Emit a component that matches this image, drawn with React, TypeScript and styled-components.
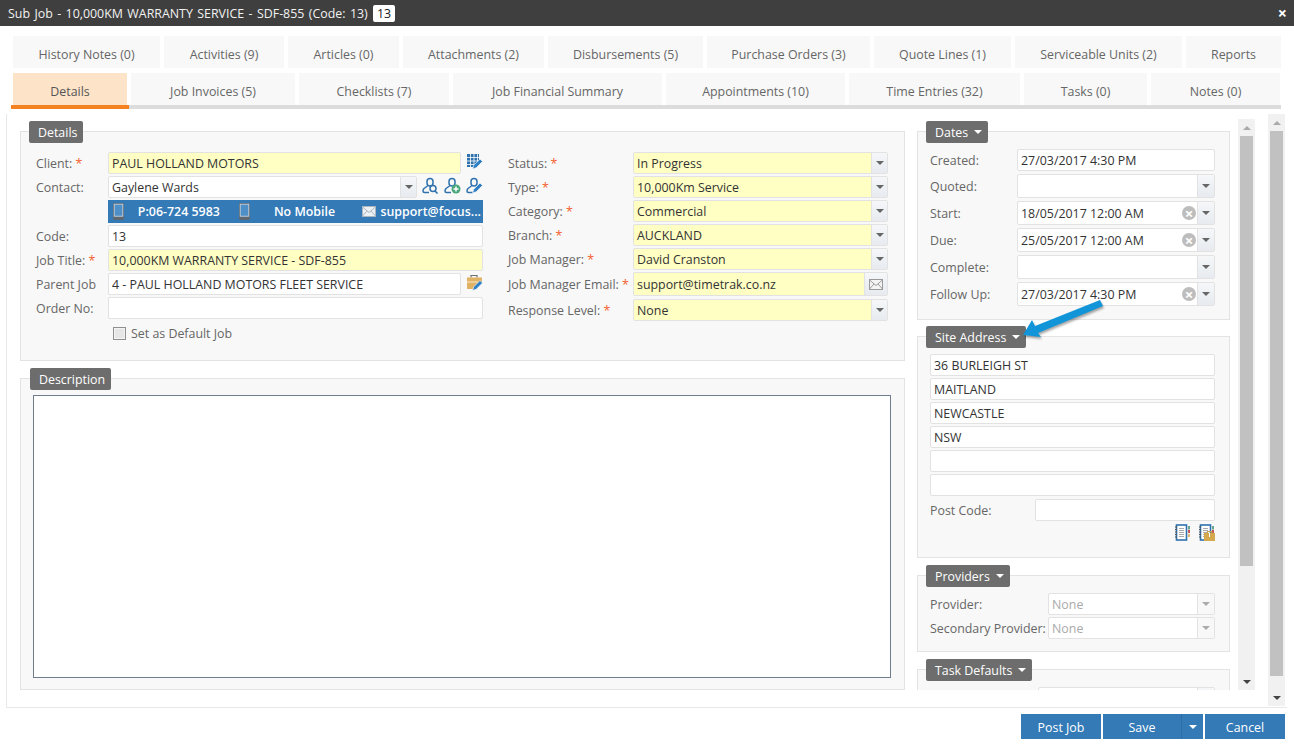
import React from 'react';
import styled, {createGlobalStyle} from 'styled-components';

const GlobalStyle = createGlobalStyle`
  html, body {
    margin: 0;
    padding: 0;
    background: #fff;
    overflow: hidden;
  }
  * {
    box-sizing: border-box;
  }
  body {
    font-family: "Open Sans", "Liberation Sans", sans-serif;
    font-size: 12.4px;
    color: #333;
  }
`

const BLUE = '#2f72ad'
const PEN = '#2f7fc4'

const topTabs = [
    {label: 'History Notes (0)', w: 147},
    {label: 'Activities (9)', w: 120},
    {label: 'Articles (0)', w: 111},
    {label: 'Attachments (2)', w: 141},
    {label: 'Disbursements (5)', w: 155},
    {label: 'Purchase Orders (3)', w: 163},
    {label: 'Quote Lines (1)', w: 137},
    {label: 'Serviceable Units (2)', w: 167},
    {label: 'Reports', w: 95},
]

const bottomTabs = [
    {label: 'Job Invoices (5)', w: 164},
    {label: 'Checklists (7)', w: 150},
    {label: 'Job Financial Summary', w: 209},
    {label: 'Appointments (10)', w: 179},
    {label: 'Time Entries (32)', w: 171},
    {label: 'Tasks (0)', w: 123},
    {label: 'Notes (0)', w: 129},
]

const Pencil = ({x = 0, y = 0}: {x?: number, y?: number}) => (
    <path transform={`translate(${x} ${y}) scale(1.25)`} d="M0 8 L1 5 L6 0 L8 2 L3 7 Z" fill={PEN} stroke="#fff" strokeWidth="0.5"/>
)

const Person = () => (
    <path d="M8 1.5 a3 3 0 0 1 3 3 v1.5 a3 3 0 0 1 -6 0 v-1.5 a3 3 0 0 1 3 -3 Z M5.5 9 L2 11.5 q-1 1 -1 2.5 q0 1.5 1.5 1.5 H7" fill="none" stroke={BLUE} strokeWidth="1.5"/>
)

const SearchPersonIcon = () => (
    <svg width="17" height="17" viewBox="0 0 17 17">
        <Person/>
        <circle cx="11" cy="11.5" r="3" fill="none" stroke={BLUE} strokeWidth="1.5"/>
        <path d="M13 14 L15.5 16.5" stroke={BLUE} strokeWidth="1.6"/>
    </svg>
)

const AddPersonIcon = () => (
    <svg width="17" height="17" viewBox="0 0 17 17">
        <Person/>
        <circle cx="12" cy="12" r="4.5" fill="#4aa77c"/>
        <path d="M12 9.5 V14.5 M9.5 12 H14.5" stroke="#fff" strokeWidth="1.5"/>
    </svg>
)

const EditPersonIcon = () => (
    <svg width="17" height="17" viewBox="0 0 17 17">
        <Person/>
        <Pencil x={6.5} y={6}/>
    </svg>
)

const BuildingIcon = () => (
    <svg width="17" height="17" viewBox="0 0 17 17">
        <path d="M1 1 H13 V8 L7 14 H1 Z" fill={BLUE}/>
        <path d="M4.5 1 V14 M8 1 V11 M11.5 1 V8 M1 4.5 H13 M1 8 H13 M1 11.5 H8" stroke="#fff" strokeWidth="0.8"/>
        <Pencil x={6.5} y={6}/>
    </svg>
)

const CaseIcon = () => (
    <svg width="17" height="17" viewBox="0 0 17 17">
        <path d="M5 3.5 V1.5 H11 V3.5" fill="none" stroke="#6f6f6f" strokeWidth="1.2"/>
        <path d="M1 3.5 H16 V8 L9 15 H1 Z" fill="#e0b263"/>
        <path d="M1 8 H12" stroke="#fff" strokeWidth="0.7"/>
        <Pencil x={6.5} y={6.5}/>
    </svg>
)

const BookBase = () => (
    <>
        <rect x="2.5" y="1" width="10" height="15" fill="#fff" stroke={BLUE} strokeWidth="1.6"/>
        <path d="M1 3 H3 M1 5.5 H3 M1 8 H3 M1 10.5 H3 M1 13 H3" stroke="#555" strokeWidth="1"/>
        <path d="M5 4.5 H10 M5 6.5 H10 M5 8.5 H10 M5 10.5 H10 M5 12.5 H10" stroke="#aaa" strokeWidth="1"/>
        <rect x="14" y="2" width="2" height="3.5" fill="#6ba58b"/>
        <rect x="14" y="6" width="2" height="3" fill="#c9555a"/>
        <rect x="14" y="10" width="2" height="3" fill="#e2bb6d"/>
    </>
)

const BookIcon = () => (
    <svg width="17" height="17" viewBox="0 0 17 17"><BookBase/></svg>
)

const BookCaseIcon = () => (
    <svg width="17" height="17" viewBox="0 0 17 17">
        <BookBase/>
        <path d="M9.5 9 V7.5 H13.5 V9" fill="none" stroke="#c9a24f" strokeWidth="1.2"/>
        <rect x="6" y="9" width="11" height="8" fill="#d4a94e"/>
        <path d="M11.5 9 V13" stroke="#fff" strokeWidth="1"/>
    </svg>
)

const DeviceIcon = () => (
    <DeviceSvg width="11" height="17" viewBox="0 0 11 17">
        <rect x="0" y="0" width="11" height="17" rx="1.4" fill="#5d6873"/>
        <rect x="1.2" y="1.2" width="8.6" height="12" fill="#4f8fc8" stroke="#cfdbe6" strokeWidth="0.8"/>
    </DeviceSvg>
)

const MailIcon = ({color, line}: {color: string, line: string}) => (
    <svg width="14" height="11" viewBox="0 0 14 11">
        <rect x="0.5" y="0.5" width="13" height="10" fill={color} stroke={line} strokeWidth="1"/>
        <path d="M0.5 1 L7 6.5 L13.5 1 M0.5 10 L5 5 M13.5 10 L9 5" fill="none" stroke={line} strokeWidth="1"/>
    </svg>
)

const Caret = ({up, color}: {up?: boolean, color?: string}) => <CaretShape $up={up} $color={color}/>

const Required = () => <Star>*</Star>

const Scrollbar = ({thumb, ...rest}: {thumb: number, $top: number, $left: number, $h: number}) => (
    <ScrollTrack {...rest}>
        <ScrollButton><Caret up color={'#aaa'}/></ScrollButton>
        <ScrollThumb $h={thumb}/>
        <ScrollSpacer/>
        <ScrollButton><Caret color={'#444'}/></ScrollButton>
    </ScrollTrack>
)

const DateField = ({value, clear}: {value?: string, clear?: boolean}) => (
    <FieldBox $h={24}>
        <FieldText>{value}</FieldText>
        {clear && <ClearDot>×</ClearDot>}
        <DropCell $w={17}><Caret color={'#666'}/></DropCell>
    </FieldBox>
)

const Combo = ({value, yellow}: {value: string, yellow?: boolean}) => (
    <FieldBox $yellow={yellow}>
        <FieldText>{value}</FieldText>
        <DropCell><Caret color={'#666'}/></DropCell>
    </FieldBox>
)

const Arrow = () => (
    <ArrowOverlay width="90" height="50" viewBox="0 0 90 50">
        <path d="M3 40 L12 25 L15 31 L80 5 L83 11 L18 38 L21 42 Z" fill="#1295d8"/>
    </ArrowOverlay>
)

export default function App() {
    return (
        <Page>
            <GlobalStyle/>
            <TitleBar>
                <TitleText>Sub Job - 10,000KM WARRANTY SERVICE - SDF-855 (Code: 13)</TitleText>
                <TitleBadge>13</TitleBadge>
                <CloseMark>×</CloseMark>
            </TitleBar>

            <TabsArea>
                <TabRow>
                    {topTabs.map(t => <Tab key={t.label} $w={t.w}>{t.label}</Tab>)}
                </TabRow>
                <TabRow>
                    <Tab $w={114} $active>Details</Tab>
                    {bottomTabs.map(t => <Tab key={t.label} $w={t.w}>{t.label}</Tab>)}
                </TabRow>
            </TabsArea>
            <TabLine/>

            <Content>
                <LeftColumn>
                    <Panel $h={230}>
                        <Legend $gap={9}>Details</Legend>
                        <DetailsForm>
                            <FormColumn $w={447}>
                                <Row>
                                    <Label $w={72}>Client: <Required/></Label>
                                    <FieldBox $yellow $w={353}><FieldText>PAUL HOLLAND MOTORS</FieldText></FieldBox>
                                    <IconSlot><BuildingIcon/></IconSlot>
                                </Row>
                                <Row>
                                    <Label $w={72}>Contact:</Label>
                                    <FieldBox $w={309}>
                                        <FieldText>Gaylene Wards</FieldText>
                                        <DropCell><Caret color={'#666'}/></DropCell>
                                    </FieldBox>
                                    <IconSlot><SearchPersonIcon/></IconSlot>
                                    <IconSlot><AddPersonIcon/></IconSlot>
                                    <IconSlot><EditPersonIcon/></IconSlot>
                                </Row>
                                <Row $h={23}>
                                    <Label $w={72}/>
                                    <PhoneBar>
                                        <PhoneCell><DeviceIcon/><PhoneText>P:06-724 5983</PhoneText></PhoneCell>
                                        <PhoneCell><DeviceIcon/><PhoneText>No Mobile</PhoneText></PhoneCell>
                                        <PhoneCell $tight><MailIcon color={'#eef1f4'} line={'#a9b6c2'}/><PhoneText>support@focus...</PhoneText></PhoneCell>
                                    </PhoneBar>
                                </Row>
                                <Row>
                                    <Label $w={72}>Code:</Label>
                                    <FieldBox><FieldText>13</FieldText></FieldBox>
                                </Row>
                                <Row>
                                    <Label $w={72}>Job Title: <Required/></Label>
                                    <FieldBox $yellow><FieldText>10,000KM WARRANTY SERVICE - SDF-855</FieldText></FieldBox>
                                </Row>
                                <Row>
                                    <Label $w={72}>Parent Job</Label>
                                    <FieldBox $w={353}><FieldText>4 - PAUL HOLLAND MOTORS FLEET SERVICE</FieldText></FieldBox>
                                    <IconSlot><CaseIcon/></IconSlot>
                                </Row>
                                <Row>
                                    <Label $w={72}>Order No:</Label>
                                    <FieldBox/>
                                </Row>
                                <CheckRow>
                                    <CheckBox/>
                                    <CheckLabel>Set as Default Job</CheckLabel>
                                </CheckRow>
                            </FormColumn>
                            <FormColumn $w={380}>
                                <Row>
                                    <Label $w={125}>Status: <Required/></Label>
                                    <Combo yellow value={'In Progress'}/>
                                </Row>
                                <Row>
                                    <Label $w={125}>Type: <Required/></Label>
                                    <Combo yellow value={'10,000Km Service'}/>
                                </Row>
                                <Row>
                                    <Label $w={125}>Category: <Required/></Label>
                                    <Combo yellow value={'Commercial'}/>
                                </Row>
                                <Row>
                                    <Label $w={125}>Branch: <Required/></Label>
                                    <Combo yellow value={'AUCKLAND'}/>
                                </Row>
                                <Row>
                                    <Label $w={125}>Job Manager: <Required/></Label>
                                    <Combo yellow value={'David Cranston'}/>
                                </Row>
                                <Row $h={24} $mb={3}>
                                    <Label $w={125}>Job Manager Email: <Required/></Label>
                                    <FieldBox $yellow $h={24}>
                                        <FieldText>support@timetrak.co.nz</FieldText>
                                        <DropCell $w={23}><MailIcon color={'#f4f4f4'} line={'#9a9a9a'}/></DropCell>
                                    </FieldBox>
                                </Row>
                                <Row>
                                    <Label $w={125}>Response Level: <Required/></Label>
                                    <Combo yellow value={'None'}/>
                                </Row>
                            </FormColumn>
                        </DetailsForm>
                    </Panel>

                    <Panel $h={312} $mt={17}>
                        <Legend $gap={5} $ml={9}>Description</Legend>
                        <DescriptionBox/>
                    </Panel>
                </LeftColumn>

                <RightColumn>
                    <Panel $h={189}>
                        <Legend $gap={6}>Dates <Caret color={'#fff'}/></Legend>
                        <SideForm>
                            <Row $mb={3}>
                                <Label $w={87}>Created:</Label>
                                <FieldBox><FieldText>27/03/2017 4:30 PM</FieldText></FieldBox>
                            </Row>
                            <Row $h={24} $mb={3}>
                                <Label $w={87}>Quoted:</Label>
                                <DateField/>
                            </Row>
                            <Row $h={24} $mb={3}>
                                <Label $w={87}>Start:</Label>
                                <DateField clear value={'18/05/2017 12:00 AM'}/>
                            </Row>
                            <Row $h={24} $mb={3}>
                                <Label $w={87}>Due:</Label>
                                <DateField clear value={'25/05/2017 12:00 AM'}/>
                            </Row>
                            <Row $h={24} $mb={3}>
                                <Label $w={87}>Complete:</Label>
                                <DateField/>
                            </Row>
                            <Row $h={24} $mb={3}>
                                <Label $w={87}>Follow Up:</Label>
                                <DateField clear value={'27/03/2017 4:30 PM'}/>
                            </Row>
                        </SideForm>
                    </Panel>

                    <Panel $h={222} $mt={16}>
                        <Legend $gap={6}>Site Address <Caret color={'#fff'}/></Legend>
                        <SideForm>
                            <Row><FieldBox><FieldText>36 BURLEIGH ST</FieldText></FieldBox></Row>
                            <Row><FieldBox><FieldText>MAITLAND</FieldText></FieldBox></Row>
                            <Row><FieldBox><FieldText>NEWCASTLE</FieldText></FieldBox></Row>
                            <Row><FieldBox><FieldText>NSW</FieldText></FieldBox></Row>
                            <Row><FieldBox/></Row>
                            <Row $mb={3}><FieldBox/></Row>
                            <Row $mb={3}>
                                <Label $w={105}>Post Code:</Label>
                                <FieldBox/>
                            </Row>
                            <BookIcons><BookIcon/><BookCaseIcon/></BookIcons>
                        </SideForm>
                    </Panel>

                    <Panel $h={77} $mt={17}>
                        <Legend $gap={6}>Providers <Caret color={'#fff'}/></Legend>
                        <SideForm>
                            <Row>
                                <Label $w={118}>Provider:</Label>
                                <FieldBox>
                                    <FieldText $muted>None</FieldText>
                                    <DropCell $w={17} $light><Caret color={'#aaa'}/></DropCell>
                                </FieldBox>
                            </Row>
                            <Row>
                                <Label $w={118}>Secondary Provider:</Label>
                                <FieldBox>
                                    <FieldText $muted>None</FieldText>
                                    <DropCell $w={17} $light><Caret color={'#aaa'}/></DropCell>
                                </FieldBox>
                            </Row>
                        </SideForm>
                    </Panel>

                    <Panel $h={60} $mt={17}>
                        <Legend $gap={6}>Task Defaults <Caret color={'#fff'}/></Legend>
                        <SideForm>
                            <Row>
                                <Label $w={108}/>
                                <FieldBox>
                                    <FieldText/>
                                    <DropCell $w={17}><Caret color={'#666'}/></DropCell>
                                </FieldBox>
                            </Row>
                        </SideForm>
                    </Panel>
                </RightColumn>

                <Scrollbar thumb={430} $top={5} $left={8} $h={571}/>
                <Scrollbar thumb={545} $top={0} $left={13} $h={592}/>
            </Content>

            <Footer>
                <ActionButton $w={80}>Post Job</ActionButton>
                <SplitButton>
                    <SplitMain>Save</SplitMain>
                    <SplitToggle><Caret color={'#fff'}/></SplitToggle>
                </SplitButton>
                <ActionButton $w={80}>Cancel</ActionButton>
            </Footer>

            <Arrow/>
        </Page>
    );
}

const Page = styled.div`
  position: relative;
  width: 1294px;
  height: 748px;
  display: flex;
  flex-direction: column;
  overflow: hidden;
`

const TitleBar = styled.header`
  height: 26px;
  flex: none;
  display: flex;
  align-items: center;
  padding: 0 7px 0 8px;
  background-color: #3f3f3f;
  color: #f2f2f2;
`

const TitleText = styled.span`
  width: 360px;
  font-size: 12.4px;
  word-spacing: 1.2px;
  white-space: nowrap;
`

const TitleBadge = styled.span`
  margin-left: 5px;
  width: 22px;
  height: 17px;
  line-height: 17px;
  text-align: center;
  border-radius: 2px;
  background-color: #fff;
  color: #222;
`

const CloseMark = styled.span`
  margin-left: auto;
  font-size: 16px;
  font-weight: 700;
  line-height: 16px;
  color: #fff;
`

const TabsArea = styled.div`
  flex: none;
  display: flex;
  flex-direction: column;
  gap: 5px;
  padding: 10px 0 0 13px;
`

const TabRow = styled.div`
  display: flex;
  gap: 4px;
`

const Tab = styled.div<{ $w: number, $active?: boolean }>`
  position: relative;
  width: ${p => p.$w}px;
  height: 32px;
  padding-top: 4px;
  display: flex;
  align-items: center;
  justify-content: center;
  white-space: nowrap;
  color: ${p => p.$active ? '#555' : '#666'};
  background-color: ${p => p.$active ? '#fde3c8' : '#f8f8f8'};

  &::after {
    content: '';
    display: ${p => p.$active ? 'block' : 'none'};
    position: absolute;
    left: -2px;
    right: -2px;
    bottom: -4px;
    height: 4px;
    background-color: #f58220;
  }
`

const TabLine = styled.div`
  flex: none;
  height: 4px;
  margin: 0 13px 0 11px;
  background-color: #dcdcdc;
`

const Content = styled.main`
  flex: none;
  height: 594px;
  margin: 5px 7px 0 6px;
  display: flex;
  border-left: 1px solid #e8e8e8;
  border-bottom: 1px solid #e8e8e8;
`

const LeftColumn = styled.section`
  flex: none;
  width: 885px;
  margin-left: 13px;
  padding-top: 17px;
`

const RightColumn = styled.section`
  flex: none;
  width: 313px;
  height: 576px;
  margin-left: 12px;
  padding-top: 17px;
  overflow: hidden;
`

const Panel = styled.div<{ $h: number, $mt?: number }>`
  height: ${p => p.$h}px;
  margin-top: ${p => p.$mt ?? 0}px;
  border: 1px solid #e3e3e3;
  background-color: #f8f8f8;
`

const Legend = styled.div<{ $gap: number, $ml?: number }>`
  width: fit-content;
  height: 22px;
  margin: -11px 0 ${p => p.$gap}px ${p => p.$ml ?? 8}px;
  padding: 0 6px 0 9px;
  display: flex;
  align-items: center;
  gap: 6px;
  border-radius: 2px;
  background-color: #6d6d6d;
  color: #fff;
  white-space: nowrap;
`

const DetailsForm = styled.div`
  display: flex;
  gap: 25px;
  padding-left: 15px;
`

const SideForm = styled.div`
  padding: 0 14px 0 12px;
`

const FormColumn = styled.div<{ $w: number }>`
  flex: none;
  width: ${p => p.$w}px;
`

const Row = styled.div<{ $h?: number, $mb?: number }>`
  display: flex;
  align-items: center;
  height: ${p => p.$h ?? 22}px;
  margin-bottom: ${p => p.$mb ?? 2}px;
`

const Label = styled.label<{ $w: number }>`
  flex: none;
  width: ${p => p.$w}px;
  color: #666;
  white-space: nowrap;
`

const Star = styled.span`
  color: #f4602e;
`

const FieldBox = styled.div<{ $yellow?: boolean, $w?: number, $h?: number }>`
  flex: ${p => p.$w ? 'none' : '1'};
  width: ${p => p.$w ? `${p.$w}px` : 'auto'};
  min-width: 0;
  height: ${p => p.$h ?? 22}px;
  display: flex;
  align-items: center;
  border: 1px solid #e2e2e2;
  border-radius: 2px;
  background-color: ${p => p.$yellow ? '#ffffc4' : '#fff'};
`

const FieldText = styled.span<{ $muted?: boolean }>`
  flex: 1;
  padding: 0 3px;
  color: ${p => p.$muted ? '#aaa' : '#333'};
  white-space: nowrap;
  overflow: hidden;
`

const DropCell = styled.span<{ $w?: number, $light?: boolean }>`
  flex: none;
  align-self: stretch;
  width: ${p => p.$w ?? 16}px;
  display: flex;
  align-items: center;
  justify-content: center;
  border-left: 1px solid #e2e2e2;
  background: ${p => p.$light ? '#f8f8f8' : 'linear-gradient(#f5f7f9, #e7ebef)'};
`

const CaretShape = styled.span<{ $up?: boolean, $color?: string }>`
  display: inline-block;
  width: 0;
  height: 0;
  border-left: 4px solid transparent;
  border-right: 4px solid transparent;
  border-top: ${p => p.$up ? '0' : `4px solid ${p.$color ?? '#666'}`};
  border-bottom: ${p => p.$up ? `4px solid ${p.$color ?? '#666'}` : '0'};
`

const ClearDot = styled.span`
  flex: none;
  width: 14px;
  height: 14px;
  margin-right: 1px;
  border-radius: 50%;
  display: flex;
  align-items: center;
  justify-content: center;
  font-size: 15px;
  font-weight: 700;
  line-height: 14px;
  color: #fff;
  background-color: #bdbdbd;
`

const IconSlot = styled.span`
  flex: none;
  width: 17px;
  height: 17px;
  margin-left: 5px;
  margin-top: -3px;
  display: flex;
`

const PhoneBar = styled.div`
  flex: 1;
  height: 23px;
  display: flex;
  background-color: #337ab7;
`

const PhoneCell = styled.div<{ $tight?: boolean }>`
  flex: 1;
  min-width: 0;
  display: flex;
  align-items: center;
  gap: ${p => p.$tight ? '2px' : '0'};
  padding-left: ${p => p.$tight ? '3px' : '5px'};
  color: #fff;
  font-weight: 600;
`

const DeviceSvg = styled.svg`
  flex: none;
`

const PhoneText = styled.span`
  flex: 1;
  text-align: center;
  white-space: nowrap;
`

const CheckRow = styled.div`
  display: flex;
  align-items: center;
  gap: 5px;
  margin-top: 6px;
  padding-left: 77px;
  color: #666;
`

const CheckBox = styled.span`
  width: 13px;
  height: 13px;
  border: 1px solid #8e8f8f;
  background-color: #e6e6e6;
  box-shadow: inset 0 0 0 1px #f4f4f4;
`

const CheckLabel = styled.span`
  white-space: nowrap;
`

const DescriptionBox = styled.div`
  width: 858px;
  height: 283px;
  margin-left: 12px;
  border: 1px solid #6f7d8c;
  background-color: #fff;
`

const BookIcons = styled.div`
  display: flex;
  justify-content: flex-end;
  gap: 7px;
  margin-top: 1px;
`

const ScrollTrack = styled.div<{ $top: number, $left: number, $h: number }>`
  flex: none;
  width: 17px;
  height: ${p => p.$h}px;
  margin: ${p => p.$top}px 0 0 ${p => p.$left}px;
  display: flex;
  flex-direction: column;
  align-items: center;
  background-color: #f1f1f1;
`

const ScrollButton = styled.div`
  flex: none;
  height: 17px;
  display: flex;
  align-items: center;
  justify-content: center;
`

const ScrollThumb = styled.div<{ $h: number }>`
  flex: none;
  width: 13px;
  height: ${p => p.$h}px;
  background-color: #c1c1c1;
`

const ScrollSpacer = styled.div`
  flex: 1;
`

const Footer = styled.footer`
  flex: none;
  display: flex;
  justify-content: flex-end;
  gap: 2px;
  margin-top: 6px;
  padding-right: 9px;
`

const ActionButton = styled.button<{ $w: number }>`
  width: ${p => p.$w}px;
  height: 25px;
  padding: 2px 0 0;
  border: 0;
  font: inherit;
  color: #fff;
  background-color: #337ab7;
`

const SplitButton = styled.div`
  display: flex;
  width: 100px;
  height: 25px;
  color: #fff;
  background-color: #337ab7;
`

const SplitMain = styled.span`
  width: 79px;
  padding-top: 2px;
  display: flex;
  align-items: center;
  justify-content: center;
  border-right: 1px solid #2e6da4;
`

const SplitToggle = styled.span`
  flex: 1;
  display: flex;
  align-items: center;
  justify-content: center;
`

const ArrowOverlay = styled.svg`
  position: absolute;
  left: 1020px;
  top: 295px;
  filter: drop-shadow(1px 2px 1px rgba(0, 0, 0, 0.35));
`
